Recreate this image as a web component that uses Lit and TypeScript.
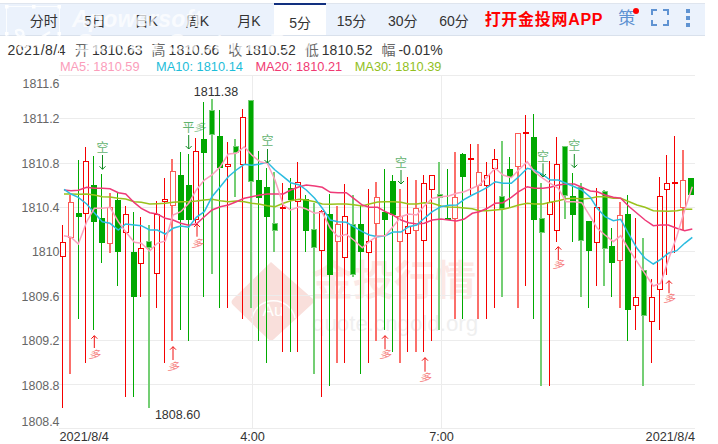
import { LitElement, html, css, svg } from "lit";
import { customElement } from "lit/decorators.js";

type C = [string, number, number, number, number];
const CANDLES: C[] = [
  ["r",225,242.3,256.7,407.7],["R",195,202,236.7,374],["g",160,212.7,215.7,319],["r",146.7,161.3,213.3,363],
  ["g",156,185,220.7,330],["g",174,218.3,242.7,263],["R",193,206.7,243,252.7],["g",193,200,251,285.7],
  ["r",206,214.3,232.3,396.7],["g",211.7,251.7,296,396.7],["r",217.3,248.3,263.3,296.7],["G",225,241,246.7,407.7],
  ["r",200.7,214,273.3,307.7],["r",178.3,199.3,201.7,363.3],["R",159.3,171,205.3,341],["g",151.7,175,219.3,330],
  ["g",154,185,219,341],["r",138.3,151,218.7,223],["g",101.7,139.3,152.7,296.7],["G",99,110,134,274.3],
  ["g",110,136,167.3,307.7],["r",141.7,164.3,166,307.7],["G",139.3,145.7,151.7,196.7],["r",109.3,116.7,163.3,319],
  ["G",100,100,180.7,307.7],["g",150.7,180,196.7,341],["g",168,187.3,216.7,363.3],["G",171.7,223.3,230,252.3],
  ["r",182.7,206.7,207.7,352.3],["g",178.3,188.3,199,352.3],["r",161.7,182.3,201.7,352.3],["g",195,199.3,230,252.3],
  ["G",203,229.3,247.7,374.3],["r",210,210.7,250,396.7],["g",194,214,274.3,385.7],["R",206,224.3,241.7,363.3],
  ["r",184,216,257.3,363.3],["G",195,224.3,274.3,277],["g",205,224.3,251.7,374.3],["r",189,241.3,252,363.3],
  ["R",181.7,197.3,223.3,341],["g",169.3,211.7,218.7,330],["g",175,181,214,352.3],["R",189,215.7,240.3,363.3],
  ["r",177.3,225.7,232.3,352.3],["R",180,208.3,230,352.3],["r",175,183.3,240.7,352.3],["r",175,175.3,189,341],
  ["G",161.7,194,196.7,330],["g",169.3,218,219,219],["R",151.7,197.3,218.3,319],["g",153.3,154,175.7,319],
  ["r",144.3,158,158.7,195],["R",144.3,172.3,185.7,319],["r",161.7,175.3,185.7,319],["r",149.3,159.3,168.7,307.7],
  ["G",140.7,196,208,296.7],["g",157.3,168.7,175.3,207.3],["R",133,133.3,166.7,307.7],["r",115,132,132.7,285.7],
  ["g",114,137,218.7,319],["G",183,218,232.3,385.7],["r",160.7,201.7,213.3,385.7],["r",137.3,164.3,230,241.7],
  ["G",146,146,195,219.3],["g",173.3,196,213.7,241.7],["G",182.7,187.3,240,296.7],["g",221,221,250,307.7],
  ["r",188.3,206.7,241.7,285.7],["G",190,190.7,247.7,285.7],["g",228.3,246,261.7,296.7],["R",201.7,215.3,260.7,307.7],
  ["g",195,214,309,341],["r",218.3,296.7,304.3,330],["G",238.3,270,315,385.7],["r",279,297.3,321.7,363.3],
  ["r",177.3,196.3,289.3,330],["r",155,183.3,189,275],["r",136,182,182.7,252.7],["R",150,180.3,207.7,230],
  ["g",178.3,178.3,194.7,194.7],
];
const cx = (i: number) => 62.4 + 7.85 * i;

const sec = (base: number, pts: number[]) => {
  const out: string[] = [];
  for (let i = 0; i < pts.length; i += 2) out.push(`${(base + pts[i] / 3).toFixed(1)},${(80 + pts[i + 1] / 3).toFixed(1)}`);
  return out.join(" ");
};
const line = (a: number[], b: number[], c: number[]) => `${sec(0, a)} ${sec(240, b)} ${sec(478, c)}`;

const MA5 = line(
  [192,467,213,472,235,492,260,425,283,385,307,385,330,382,355,425,377,455,403,487,424,490,449,513,472,490,496,483,519,405,542,395,566,370,589,330,613,300,636,285,661,260,685,222,709,220],
  [13,200,35,225,60,245,82,250,105,300,130,375,152,390,178,380,199,387,224,400,247,397,271,445,294,470,319,463,341,480,367,503,388,485,413,467,436,467,459,440,483,410,506,402,530,405,553,378,577,355,603,350,626,348,650,340,673,335,697,325,718,315],
  [28,290,52,265,75,285,100,293,122,270,148,245,169,275,195,295,217,310,241,325,264,365,289,365,311,368,337,410,358,445,381,465,406,485,428,467,454,510,477,545,497,575,526,618,548,610,571,540,596,470,620,390,643,320],
);
const MA10 = line(
  [192,328,213,342,235,352,260,372,283,398,307,425,330,430,355,450,377,432,403,435,424,437,449,450,472,450,496,462,519,445,542,438,566,442,589,412,613,395,636,350,661,320,685,290,709,270],
  [13,253,35,256,60,252,82,247,105,270,130,290,152,308,178,315,199,330,224,355,247,385,271,420,294,425,319,427,341,440,367,455,388,465,413,470,436,467,459,456,483,456,506,440,530,435,553,415,577,395,603,380,626,376,650,375,673,358,697,345,718,335],
  [28,322,52,305,75,310,100,310,122,290,148,265,169,270,195,285,217,300,241,300,264,310,289,320,311,330,337,352,358,385,381,410,406,422,428,418,454,465,477,505,501,535,526,552,548,538,571,520,596,512,620,490,643,472],
);
const MA20 = line(
  [192,330,213,332,235,331,260,322,283,325,307,325,330,326,355,338,377,342,403,368,424,385,449,398,472,402,496,415,519,420,542,430,566,436,589,432,613,410,636,390,661,380,685,375,709,365],
  [13,355,35,350,60,345,82,342,105,342,130,342,152,330,178,320,199,315,224,318,247,322,271,337,294,338,319,338,341,355,367,375,388,382,413,382,436,395,459,405,483,420,506,428,530,432,553,430,577,420,603,417,626,420,650,423,673,417,697,400,718,395],
  [28,385,52,370,75,368,100,352,122,335,148,320,169,325,195,325,217,322,241,315,264,312,289,312,311,322,337,333,358,335,381,345,406,352,428,355,454,380,477,400,501,420,526,437,548,435,571,435,596,445,620,452,643,447],
);
const MA30 = line(
  [192,342,213,342,235,343,260,342,283,345,307,350,330,351,355,355,377,357,403,365,424,367,449,372,472,371,496,370,519,367,542,365,566,365,589,363,613,360,636,358,661,362,685,365,709,363],
  [13,365,35,370,60,373,82,377,105,380,130,370,152,362,178,358,199,360,224,365,247,372,271,373,294,372,319,372,341,374,367,378,388,372,413,366,436,365,459,365,483,367,506,372,530,372,553,368,577,370,603,378,626,381,650,382,673,384,697,386,718,392],
  [28,392,52,390,75,388,100,382,122,375,148,370,169,372,195,372,217,367,241,362,264,356,289,355,311,357,337,355,358,350,381,350,406,355,428,355,454,365,477,375,501,382,526,392,548,393,571,394,596,392,620,388,643,388],
);

const GRID = [75.5, 118.5, 163.5, 207.5, 251.5, 295.5, 340.5, 384.5, 428.5];
const YLABELS: [string, number][] = [["1811.6",88],["1811.2",123],["1810.8",168],["1810.4",212],["1810",256],["1809.6",301],["1809.2",345],["1808.8",390],["1808.4",426]];
const SHORT: [number, number, number, number][] = [[102.5,147.5,155,169.3],[267.5,140,149,163],[401,162.7,170,184],[543,156,163.3,177],[574.3,145.7,154,167.7]];
const LONG: [number, number, number, number][] = [[94.3,335.7,348,354],[173,346.7,360,365.7],[197,224,236.7,243.3],[385,335.7,349.3,354.3],[425,357.7,371.7,376.7],[558.3,246.7,260,264.3],[669,280.7,293.3,298.3]];
const TABS = ["分时","5日","日K","周K","月K","5分","15分","30分","60分"];

@customElement("app-root")
export class AppRoot extends LitElement {
  static styles = css`
    :host { display: block; position: relative; width: 718px; height: 444px; overflow: hidden; background: #fff;
      font-family: "Liberation Sans", "Noto Sans CJK SC", sans-serif; color: #333; }
    .bar { display: flex; align-items: stretch; box-sizing: border-box; width: 705px; height: 33px; margin-top: 3px; padding-left: 18px;
      background: #ebf2fc; border-top: 1px solid #dfe5ee; border-bottom: 1px solid #d9e1ec; }
    .tab { width: 51.3px; display: flex; align-items: center; justify-content: center; font-size: 14px; color: #333; padding-top: 1px; box-sizing: border-box; }
    .tab.on { background: #fff; border-top: 2px solid #12307f; height: 32px; margin-top: -1px; padding-top: 3px; }
    .app { margin-left: 5px; align-self: center; font-size: 16px; font-weight: 700; color: #f00; letter-spacing: .7px; white-space: nowrap; margin-top: -3px; }
    .ce { position: relative; margin-left: 15px; align-self: center; font-size: 17px; color: #5f93d2; margin-top: -2px; line-height: 20px; }
    .dot { position: absolute; top: -1px; right: -4px; width: 6px; height: 6px; border-radius: 50%; background: #f00; }
    .fs { margin-left: 16px; align-self: center; margin-top: -4px; }
    .more { margin-left: 17px; align-self: center; margin-top: -4px; display: flex; flex-direction: column; gap: 3px; }
    .more i { display: block; width: 4px; height: 4px; background: #5f93d2; }
    .info { display: flex; height: 17px; margin-top: 6px; padding-left: 7.5px; font-size: 14px; line-height: 17px; white-space: nowrap; color: #333; }
    .date { letter-spacing: .5px; margin-right: 9px; }
    .info b { font-weight: 400; color: #666; margin-right: 3px; }
    .info span.v { margin-right: 9px; }
    .legend { display: flex; justify-content: flex-end; gap: 12.5px; width: 441.5px; height: 15px; line-height: 15px; font-size: 12.8px; white-space: nowrap; }
    .m5 { color: #fb9dba; margin-right: 4px; } .m10 { color: #1dbdd9; } .m20 { color: #f03a72; } .m30 { color: #92bf1e; }
    svg.chart { display: block; width: 718px; height: 370px; }
    .ylab { font-size: 12.4px; fill: #666; text-anchor: end; }
    .xlab { font-size: 12.7px; fill: #333; }
    .hl { font-size: 12.5px; fill: #333; text-anchor: middle; }
    .mk { font-size: 12px; text-anchor: middle; }
    .wmt { font-size: 41px; font-weight: 700; fill: #fce9e6; }
    .wmu { font-size: 22.3px; fill: #efefef; }
    .wma { font-size: 17px; fill: #fff; text-anchor: middle; }
    .shot { position: absolute; left: 0; top: 0; pointer-events: none; }
    .wm { position: absolute; font-weight: 700; font-style: italic; color: rgba(255,255,255,.72); white-space: nowrap; }
    .w1 { left: 72px; top: 5px; font-size: 23px; line-height: 28px; letter-spacing: .3px; }
    .w2 { left: 76px; top: 29px; font-size: 25px; line-height: 28px; }
  `;

  private chart() {
    return svg`
      <svg class="chart" viewBox="0 74 718 370">
        <g>
          <path d="M271 262 L313 299 Q315 302 311 305 L274 339 Q271 342 268 339 L233 305 Q230 302 233 299 Z" fill="#f9dfdb"/>
          <path d="M252 318 A22 22 0 0 1 295 318" fill="none" stroke="#fff" stroke-width="1.5"/>
          <text class="wma" x="273" y="316">Au</text>
          <text class="wmt" x="312" y="295">金投行情</text>
          <text class="wmu" x="312" y="331">quote.cngold.org</text>
        </g>
        ${GRID.map((y) => svg`<line x1="59" x2="695" y1=${y} y2=${y} stroke="#ececec" stroke-width="1"/>`)}
        <line x1="252.5" x2="252.5" y1="75" y2="428" stroke="#ececec"/>
        <line x1="441.5" x2="441.5" y1="75" y2="428" stroke="#ececec"/>
        ${YLABELS.map(([t, y]) => svg`<text class="ylab" x="59.5" y=${y}>${t}</text>`)}
        <g shape-rendering="crispEdges">
        ${CANDLES.map(([k, t, bt, bb, b], i) => {
          const red = k === "r" || k === "R";
          const faded = k === "R" || k === "G";
          const x = faded ? Math.round(cx(i)) : Math.floor(cx(i)) + 0.5;
          const bx = Math.floor(cx(i)) - 2;
          const wick = red ? (faded ? "#fb6f6a" : "#f50000") : (faded ? "#74ce74" : "#00aa00");
          const edge = red ? (faded ? "#fb5a55" : "#f50000") : (faded ? "#74ce74" : "#00a800");
          const fill = red ? "#fff" : "#00a800";
          return svg`
            <line x1=${x} x2=${x} y1=${t} y2=${b} stroke=${wick} stroke-width=${faded ? 2 : 1}/>
            <rect x=${bx + 0.5} y=${Math.round(bt) + 0.5} width="5" height=${Math.max(Math.round(bb - bt), 1)} fill=${fill} stroke=${edge} stroke-width="1"/>`;
        })}
        </g>
        <polyline points=${MA30} fill="none" stroke="#9ac21c" stroke-width="1.5"/>
        <polyline points=${MA20} fill="none" stroke="#ef3a78" stroke-width="1.5"/>
        <polyline points=${MA10} fill="none" stroke="#2bbce0" stroke-width="1.5"/>
        <polyline points=${MA5} fill="none" stroke="#fca0bd" stroke-width="1.5"/>
        ${SHORT.map(([x, ty, a, b]) => svg`
          <text class="mk" x=${x} y=${ty + 4.5} fill="#2f9a3f" opacity=".75">空</text>
          <path d="M${x} ${a}V${b}M${x - 3} ${b - 3}L${x} ${b}L${x + 3} ${b - 3}" fill="none" stroke="#0f8a20" stroke-width="1"/>`)}
        <text class="mk" x="188.5" y="131.5" fill="#2f9a3f" opacity=".75">平</text>
        <text class="mk" transform="translate(199.5 131) skewX(-18) scale(1 .85)" fill="#2f9a3f" opacity=".6">多</text>
        <path d="M188.7 135V149M185.7 146L188.7 149L191.7 146" fill="none" stroke="#0f8a20" stroke-width="1"/>
        ${LONG.map(([x, a, b, ty]) => svg`
          <path d="M${x} ${a}V${b}M${x - 3} ${a + 3}L${x} ${a}L${x + 3} ${a + 3}" fill="none" stroke="#f01010" stroke-width="1"/>
          <text class="mk" transform="translate(${x} ${ty + 4}) skewX(-18) scale(1 .85)" fill="#f02020" opacity=".6">多</text>`)}
        <text class="hl" x="216" y="96">1811.38</text>
        <text class="hl" x="177.5" y="419">1808.60</text>
        <text class="xlab" x="59.5" y="440.5">2021/8/4</text>
        <text class="xlab" x="252.5" y="440.5" text-anchor="middle">4:00</text>
        <text class="xlab" x="441.5" y="440.5" text-anchor="middle">7:00</text>
        <text class="xlab" x="695" y="440.5" text-anchor="end">2021/8/4</text>
      </svg>`;
  }

  render() {
    return html`
      <div class="bar">
        ${TABS.map((t) => html`<div class="tab ${t === "5分" ? "on" : ""}">${t}</div>`)}
        <div class="app">打开金投网APP</div>
        <div class="ce">策<span class="dot"></span></div>
        <svg class="fs" width="18" height="17" viewBox="0 0 18 17" fill="none" stroke="#5f93d2" stroke-width="2">
          <path d="M1 6V1H6M12 1H17V6M17 11V16H12M6 16H1V11"/>
        </svg>
        <div class="more"><i></i><i></i><i></i></div>
      </div>
      <div class="info">
        <span class="date">2021/8/4</span>
        <b>开</b><span class="v">1810.63</span>
        <b>高</b><span class="v">1810.66</span>
        <b>收</b><span class="v">1810.52</span>
        <b>低</b><span class="v">1810.52</span>
        <b>幅</b><span>-0.01%</span>
      </div>
      <div class="legend">
        <span class="m5">MA5: 1810.59</span><span class="m10">MA10: 1810.14</span><span class="m20">MA20: 1810.21</span><span class="m30">MA30: 1810.39</span>
      </div>
      ${this.chart()}
      <svg class="shot" width="120" height="62" viewBox="0 0 120 62" fill="none" stroke="rgba(255,255,255,.8)">
        <rect x="6.5" y="6.5" width="53" height="54" stroke-width="1"/>
        <g fill="#fff" stroke="none">
          <rect x="5" y="5" width="3.5" height="3.5"/><rect x="32" y="5" width="3.5" height="3.5"/><rect x="57.5" y="5" width="3.5" height="3.5"/>
          <rect x="57.5" y="32" width="3.5" height="3.5"/><rect x="5" y="32" width="3.5" height="3.5"/>
        </g>
        <path d="M16 31C20 28 25 32 23 35C20 38 16 35 16 31ZM23 35L40 48M18 48C21 44 27 45 27 49C26 52 20 52 18 48ZM27 46L50 32" stroke-width="2.2"/>
      </svg>
      <div class="wm w1">Apowersoft</div>
      <div class="wm w2">Screen Capture Pro</div>
    `;
  }
}
